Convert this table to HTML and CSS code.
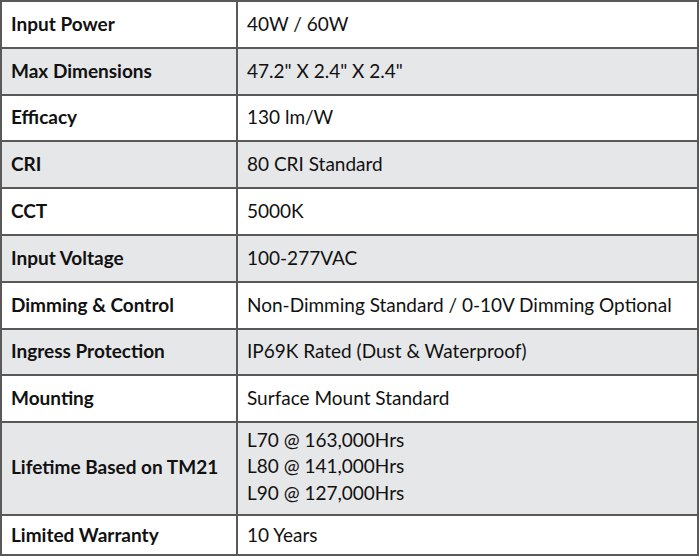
FILE: index.html
```html
<!DOCTYPE html>
<html lang="en">
<head>
<meta charset="utf-8">
<title>Specifications</title>
<link rel="stylesheet" href="styles.css">
</head>
<body>
<table class="specs">
  <tbody>
    <tr class="row"><th class="label">Input Power</th><td class="value">40W / 60W</td></tr>
    <tr class="row alt"><th class="label">Max Dimensions</th><td class="value">47.2" X 2.4" X 2.4"</td></tr>
    <tr class="row"><th class="label">Efficacy</th><td class="value">130 lm/W</td></tr>
    <tr class="row alt"><th class="label">CRI</th><td class="value">80 CRI Standard</td></tr>
    <tr class="row"><th class="label">CCT</th><td class="value">5000K</td></tr>
    <tr class="row alt"><th class="label">Input Voltage</th><td class="value">100-277VAC</td></tr>
    <tr class="row"><th class="label">Dimming &amp; Control</th><td class="value">Non-Dimming Standard / 0-10V Dimming Optional</td></tr>
    <tr class="row alt"><th class="label">Ingress Protection</th><td class="value">IP69K Rated (Dust &amp; Waterproof)</td></tr>
    <tr class="row"><th class="label">Mounting</th><td class="value">Surface Mount Standard</td></tr>
    <tr class="row alt tall"><th class="label">Lifetime Based on TM21</th><td class="value multi">L70 @ 163,000Hrs<br>L80 @ 141,000Hrs<br>L90 @ 127,000Hrs</td></tr>
    <tr class="row short"><th class="label">Limited Warranty</th><td class="value">10 Years</td></tr>
  </tbody>
</table>
</body>
</html>
```

FILE: styles.css
```css
html, body {
  margin: 0;
  padding: 0;
  background: #ffffff;
}

.specs {
  border-collapse: collapse;
  width: 699px;
  font-family: Lato, "Open Sans", "Liberation Sans", sans-serif;
  font-size: 19px;
  color: #111111;
  table-layout: fixed;
}

.specs th,
.specs td {
  border: 2px solid #595959;
  padding: 0 0 1px 9px;
  height: 46.8px;
  box-sizing: border-box;
  text-align: left;
  vertical-align: middle;
  line-height: 22px;
}

.specs .label {
  width: 236px;
  font-weight: 700;
}

.specs .value {
  font-weight: 400;
}

.specs .alt th,
.specs .alt td {
  background: #e6e7e8;
}

.specs .tall th,
.specs .tall td {
  height: 93px;
  padding-bottom: 4px;
}

.specs .short th,
.specs .short td {
  height: 40px;
}

.specs .multi {
  line-height: 26.5px;
}
```
